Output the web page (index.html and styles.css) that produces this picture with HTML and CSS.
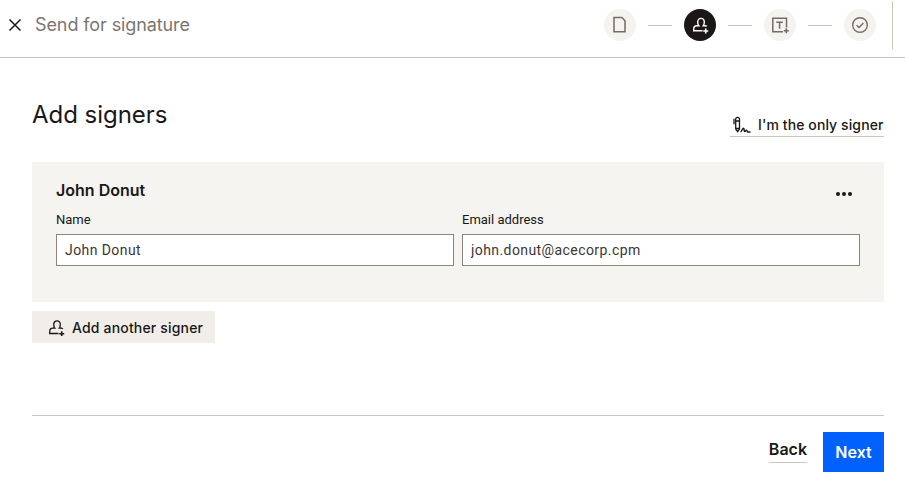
FILE: index.html
```html
<!DOCTYPE html>
<html lang="en">
<head>
<meta charset="utf-8">
<title>Send for signature</title>
<link rel="stylesheet" href="styles.css">
</head>
<body>
<header class="topbar">
  <button class="close" aria-label="Close">
    <svg width="14" height="14" viewBox="0 0 14 14"><path d="M1.500 1.500l11 11M12.500 1.500l-11 11" fill="none" stroke="#1a1716" stroke-width="1.500"/></svg>
  </button>
  <div class="title">Send for signature</div>
  <nav class="steps">
    <span class="step">
      <svg width="16" height="18" viewBox="0 0 16 18"><path d="M2 1.500h7.800l3.200 3.200v11H2z" fill="none" stroke="#736c63" stroke-width="1.500"/></svg>
    </span>
    <span class="line"></span>
    <span class="step active">
      <svg width="18" height="18" viewBox="-2 .5 18 18"><g fill="none" stroke="#fff" stroke-width="1.400"><path d="M9.500 15.200H.7v-1.700c0-1.800 1.300-3.300 3.100-3.300h2C5 9.300 4.700 8 4.700 6.800c0-2.300 1.300-3.900 3.300-3.900s3.300 1.600 3.300 3.900c0 1.200-.3 2.500-1 3.400h1.800c.7 0 1.300.2 1.800.6"/><path d="M12.700 13v5M10.200 15.500h5" stroke-width="1.600"/></g></svg>
    </span>
    <span class="line"></span>
    <span class="step">
      <svg width="20" height="20" viewBox="0 0 20 20"><g fill="none" stroke="#736c63" stroke-width="1.500"><path d="M13 16.700H2.800V3.300h13.700V12.500"/><path d="M6.300 7.300h6.600M9.600 7.300v6.400"/><path d="M16.300 13.200v5M13.800 15.700h5" stroke-width="1.600"/></g></svg>
    </span>
    <span class="line"></span>
    <span class="step">
      <svg width="18" height="18" viewBox="0 0 18 18"><g fill="none" stroke="#736c63" stroke-width="1.400"><circle cx="9" cy="9" r="7.300"/><path d="M5.600 9.200l2.400 2.300 4.400-4.600"/></g></svg>
    </span>
  </nav>
  <span class="divider"></span>
</header>
<main class="content">
  <div class="heading-row">
    <h1>Add signers</h1>
    <a class="only" href="#">
      <svg width="20" height="20" viewBox="0 0 20 20"><g fill="none" stroke="#1a1716" stroke-width="1.300"><path d="M2.700 6V4.200a1.900 1.900 0 0 1 3.800 0V14l-1.900 2.700L2.700 14zM2.700 6h3.800M1 3.800v5.500M2.700 13.500h3.800"/><path d="M7.500 17c1.200-.5 2-3.700 3-3.700s.3 3.200 1.200 3.200c.8 0 1-1.300 1.800-1.300s.5 1.800 1.300 1.800h2.700" stroke-width="1.500"/></g></svg>
      I'm the only signer
    </a>
  </div>
  <section class="card">
    <div class="card-head">
      <h2>John Donut</h2>
      <span class="more" aria-label="More"><i></i><i></i><i></i></span>
    </div>
    <div class="fields">
      <label class="field"><span>Name</span><input type="text" value="John Donut"></label>
      <label class="field"><span>Email address</span><input type="text" value="john.donut@acecorp.cpm"></label>
    </div>
  </section>
  <button class="add">
    <svg width="18" height="18" viewBox="0 0 18 18"><g fill="none" stroke="#1a1716" stroke-width="1.300"><path d="M9.500 15.500H.7v-2c0-1.800 1.300-3.300 3.100-3.300h2C5 9.300 4.700 8 4.700 6.800c0-2.300 1.300-3.900 3.300-3.900s3.300 1.600 3.300 3.900c0 1.200-.3 2.500-1 3.400h1.800c.7 0 1.300.2 1.800.6"/><path d="M12.700 13.300v5M10.200 15.800h5" stroke-width="1.600"/></g></svg>
    Add another signer
  </button>
  <footer class="actions">
    <a class="back" href="#">Back</a>
    <button class="next">Next</button>
  </footer>
</main>
</body>
</html>
```
FILE: styles.css
```css
* { box-sizing: border-box; }
html, body { margin: 0; height: 100%; background: #fff; overflow: hidden; }
body { font-family: "Roboto", "Liberation Sans", sans-serif; color: #1a1716; }
.topbar {
  height: 58px;
  border-bottom: 1px solid #c9c5bf;
  display: flex;
  align-items: flex-start;
  padding: 1px 12px 0 8px;
}
.close {
  width: 14px; height: 14px; padding: 0; margin: 17px 0 0 0;
  border: 0; background: none; display: flex;
}
.title {
  margin: 10px 0 0 13px;
  font: 400 18px/28px "Inter", sans-serif;
  letter-spacing: -.1px;
  color: #7b7570;
  flex: 1;
}
.steps { display: flex; align-items: center; gap: 12px; margin-top: 8px; }
.step {
  width: 32px; height: 32px; border-radius: 50%;
  background: #f4f3ef;
  display: flex; align-items: center; justify-content: center;
}
.step.active { background: #1a1716; }
.line { width: 24px; height: 1px; background: #c9c5bf; }
.divider { width: 1px; height: 48px; background: #c9c5bf; margin-left: 16px; }
.content { padding: 0 21px 0 32px; }
.heading-row { display: flex; justify-content: space-between; align-items: flex-end; height: 79px; }
h1 { margin: 0 0 7px; font: 400 24px/30px "Inter", sans-serif; letter-spacing: -.03px; }
.only {
  display: flex; align-items: center; gap: 5px;
  padding: 0 0 1px 3px; height: 23px; width: 154px;
  border-bottom: 1px solid #c9c5bf;
  font: 500 14px/20px "Inter", sans-serif;
  letter-spacing: .1px;
  color: #1a1716; text-decoration: none;
  white-space: nowrap;
}
.card {
  margin-top: 25px;
  height: 140px;
  background: #f5f4f1;
  padding: 16px 24px;
}
.card-head { display: flex; justify-content: space-between; align-items: flex-start; height: 24px; }
h2 { margin: 0; font: 600 16px/24px "Inter", sans-serif; }
.more { display: flex; gap: 2px; margin: 14px 8px 0 0; }
.more i { width: 4px; height: 4px; border-radius: 50%; background: #1a1716; }
.fields { display: flex; gap: 8px; margin-top: 10px; }
.field { flex: 1; display: flex; flex-direction: column; font: 400 13px/16px "Roboto", sans-serif; }
.field span { height: 22px; color: #1a1716; font-weight: 400; }
.field input {
  height: 32px; width: 100%; padding: 0 8px;
  border: 1px solid #8c857b; border-radius: 0; background: #fff;
  font: 400 14px "Roboto", sans-serif; letter-spacing: .42px; color: #3a3633; outline: 0;
}
.add {
  margin-top: 9px; height: 32px; width: 183px;
  background: #f1eee9; border: 0; padding: 0 0 0 17px;
  display: flex; align-items: center; gap: 5px;
  font: 500 14px "Inter", sans-serif; letter-spacing: .17px; color: #1a1716;
}
.actions {
  margin-top: 72px;
  border-top: 1px solid #c9c5bf;
  padding-top: 16px;
  display: flex; justify-content: flex-end; align-items: flex-start; gap: 16px;
}
.back {
  margin-top: 6px; height: 25px; padding-top: 1px;
  font: 600 16px/20px "Inter", sans-serif;
  color: #1a1716; text-decoration: none;
  border-bottom: 1px solid #c9c5bf;
}
.next {
  width: 61px; height: 40px; border: 0; background: #0061fe; color: #fff;
  font: 600 16px "Inter", sans-serif; padding: 0;
}
```
